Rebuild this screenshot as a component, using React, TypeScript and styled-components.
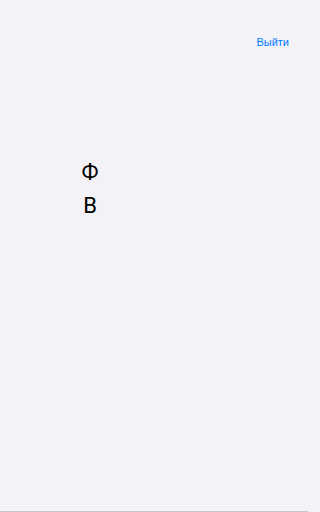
import React from 'react';
import styled, { createGlobalStyle } from 'styled-components';

const GlobalStyle = createGlobalStyle`
  html, body {
    margin: 0;
    padding: 0;
    background-color: #f2f2f7;
    overflow: hidden;
  }
  body {
    font-family: Roboto, "Liberation Sans", Arial, sans-serif;
  }
`;

const Screen = styled.div`
  display: flex;
  flex-direction: column;
  width: 308px;
  height: 512px;
  box-sizing: border-box;
  background-color: #f2f2f7;
  border-bottom: 1px solid #c6c6c8;
`;

const Header = styled.header`
  display: flex;
  justify-content: flex-end;
  align-items: center;
  height: 32px;
  margin-top: 26px;
  padding: 0 19px;
`;

const LogoutButton = styled.button`
  border: none;
  background: none;
  padding: 0;
  font-family: "Liberation Sans", Arial, sans-serif;
  font-size: 11px;
  color: #007aff;
  cursor: pointer;
`;

const Content = styled.div`
  display: flex;
  flex-direction: column;
  gap: 12px;
  padding: 103px 0 0 80px;
`;

const Letter = styled.div`
  width: 20px;
  text-align: center;
  font-family: Roboto, "Liberation Sans", Arial, sans-serif;
  font-size: 22px;
  line-height: 22px;
  color: #000000;
`;

const App: React.FC = () => {
  return (
    <>
      <GlobalStyle />
      <Screen>
        <Header>
          <LogoutButton>Выйти</LogoutButton>
        </Header>
        <Content>
          <Letter>Ф</Letter>
          <Letter>В</Letter>
        </Content>
      </Screen>
    </>
  );
};

export default App;
